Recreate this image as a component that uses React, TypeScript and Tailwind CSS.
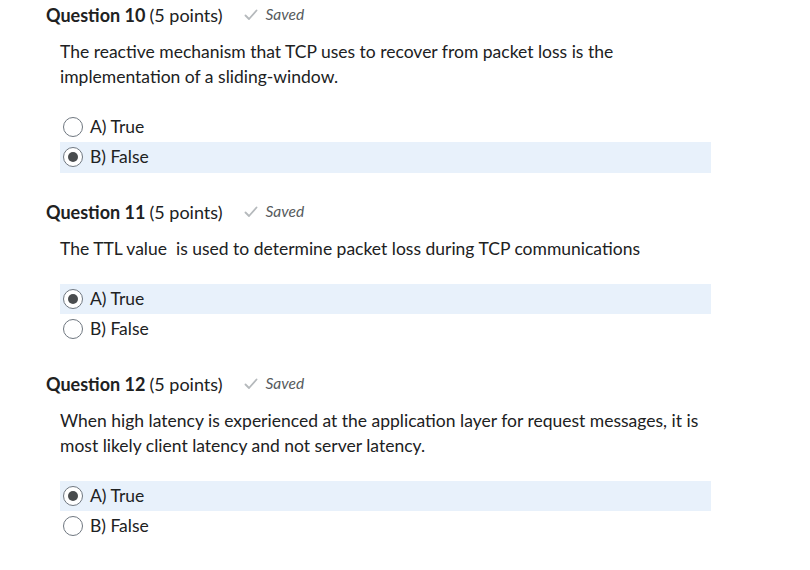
type Option = { label: string; selected: boolean };

type Question = {
  num: number;
  text: string[];
  options: Option[];
};

const questions: Question[] = [
  {
    num: 10,
    text: [
      "The reactive mechanism that TCP uses to recover from packet loss is the",
      "implementation of a sliding-window.",
    ],
    options: [
      { label: "A) True", selected: false },
      { label: "B) False", selected: true },
    ],
  },
  {
    num: 11,
    text: ["The TTL value\u00a0 is used to determine packet loss during TCP communications"],
    options: [
      { label: "A) True", selected: true },
      { label: "B) False", selected: false },
    ],
  },
  {
    num: 12,
    text: [
      "When high latency is experienced at the application layer for request messages, it is",
      "most likely client latency and not server latency.",
    ],
    options: [
      { label: "A) True", selected: true },
      { label: "B) False", selected: false },
    ],
  },
];

function Radio({ checked }: { checked: boolean }) {
  return (
    <span className="flex h-[20px] w-[20px] items-center justify-center rounded-full border border-[#6f7780] bg-white">
      {checked && <span className="h-[10px] w-[10px] rounded-full bg-[#494c4e]" />}
    </span>
  );
}

function QuestionBlock({ q, first }: { q: Question; first: boolean }) {
  return (
    <section className={first ? "pt-[3px]" : "mt-[27.5px]"}>
      <div className="flex items-center h-[24px] text-[18px] text-[#202122]">
        <span className="font-bold">Question {q.num}</span>
        <span className="ml-[4px]">(5 points)</span>
        <span className="ml-[21px] flex items-center gap-[8px] text-[15.5px] italic text-[#565a5c]">
          <svg width="14" height="12" viewBox="0 0 14 12" fill="none">
            <path d="M1.5 6.5 L5 10 L12.5 1.5" stroke="#b5b9bc" strokeWidth="1.8" strokeLinecap="round" strokeLinejoin="round" />
          </svg>
          Saved
        </span>
      </div>
      <div className="mt-[12px] pl-[14px] text-[17.5px] leading-[25px] text-[#202122]">
        {q.text.map((t) => (
          <p key={t}>{t}</p>
        ))}
      </div>
      <ul className="mt-[22.5px] ml-[14px] w-[651px]">
        {q.options.map((o) => (
          <li
            key={o.label}
            className={`flex h-[30.5px] items-center gap-[7px] pl-[3px] text-[17.5px] text-[#202122] ${o.selected ? "bg-[#e8f1fb]" : ""}`}
          >
            <Radio checked={o.selected} />
            {o.label}
          </li>
        ))}
      </ul>
    </section>
  );
}

export default function App() {
  return (
    <div className="h-[570px] w-[810px] bg-white pl-[46px] font-['Lato',sans-serif]">
      {questions.map((q, i) => (
        <QuestionBlock key={q.num} q={q} first={i === 0} />
      ))}
    </div>
  );
}
